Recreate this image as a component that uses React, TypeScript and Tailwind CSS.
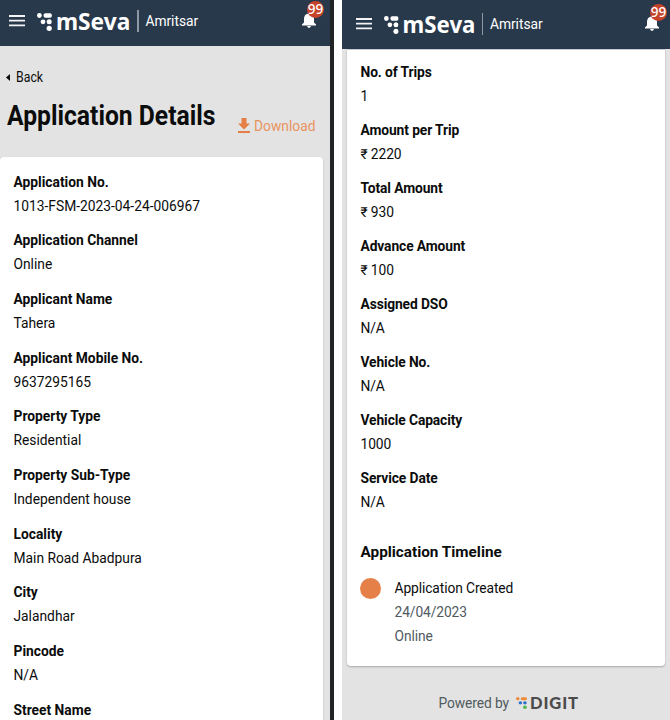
const leftFields = [
  ['Application No.', '1013-FSM-2023-04-24-006967'],
  ['Application Channel', 'Online'],
  ['Applicant Name', 'Tahera'],
  ['Applicant Mobile No.', '9637295165'],
  ['Property Type', 'Residential'],
  ['Property Sub-Type', 'Independent house'],
  ['Locality', 'Main Road Abadpura'],
  ['City', 'Jalandhar'],
  ['Pincode', 'N/A'],
  ['Street Name', ''],
];

const rightFields = [
  ['No. of Trips', '1'],
  ['Amount per Trip', '₹ 2220'],
  ['Total Amount', '₹ 930'],
  ['Advance Amount', '₹ 100'],
  ['Assigned DSO', 'N/A'],
  ['Vehicle No.', 'N/A'],
  ['Vehicle Capacity', '1000'],
  ['Service Date', 'N/A'],
];

function Dots({ className, colors }: { className: string; colors: string[] }) {
  return (
    <svg className={className} viewBox="0 0 15 18" preserveAspectRatio="none">
      <circle cx="2.4" cy="2.5" r="2.4" fill={colors[0]} />
      <rect x="6.600" y="0.2" width="8.2" height="4.6" rx="1.8" fill={colors[0]} />
      <circle cx="6" cy="8.8" r="2.4" fill={colors[1]} />
      <circle cx="12.2" cy="8.8" r="2.5" fill={colors[1]} />
      <circle cx="12.2" cy="15.3" r="2.6" fill={colors[2]} />
    </svg>
  );
}

function Header({ className, brand }: { className: string; brand: string }) {
  return (
    <header className={`flex shrink-0 items-start bg-[#28394b] text-white ${className}`}>
      <svg className="mt-[15px] h-3 w-4 shrink-0" viewBox="0 0 16 12">
        <path d="M0 1h16M0 5.700h16M0 10.400h16" stroke="#f4f4f6" strokeWidth="1.8" />
      </svg>
      <div className={`flex shrink-0 items-start ${brand}`}>
        <Dots className="mt-[13px] h-[18px] w-[15px] shrink-0" colors={['#fff', '#fff', '#fff']} />
        <span className="mt-[5.500px] ml-1 w-[75px] shrink-0 font-['Noto_Sans',sans-serif] text-[22.7px] leading-8 font-bold whitespace-nowrap">
          mSeva
        </span>
      </div>
      <span className="mt-[10px] ml-[6px] h-[22px] w-[1.5px] shrink-0 bg-[#9099a3]" />
      <span className="mt-[11px] ml-[7px] text-[13.8px] leading-5 tracking-[-0.05px]">Amritsar</span>
      <div className="relative mt-[12px] ml-auto h-4 w-[14px]">
        <svg className="h-4 w-[14px]" viewBox="0 0 14 16" fill="#fff">
          <path d="M6 0h2v1.400c2.500.6 4 2.500 4 5.300v3.700l2 2v1H0v-1l2-2V6.700c0-2.800 1.500-4.700 4-5.300zM5.200 14h3.600c0 1-.7 1.800-1.800 1.800S5.200 15 5.200 14z" />
        </svg>
        <span className="absolute -top-[11px] left-[5px] flex h-[17px] w-[17px] items-center justify-center rounded-full bg-[#c5432b] pt-px font-['Noto_Sans',sans-serif] text-[13.5px] leading-none font-medium">
          99
        </span>
      </div>
    </header>
  );
}

function Field({ label, value, pitch }: { label: string; value: string; pitch: string }) {
  return (
    <div className={`shrink-0 leading-6 whitespace-nowrap ${pitch}`}>
      <div className="font-bold">{label}</div>
      <div>{value}</div>
    </div>
  );
}

export default function App() {
  return (
    <div className="flex h-[720px] w-[670px] overflow-hidden bg-white font-[Roboto,'Noto_Sans',sans-serif] text-[#0b0c0c]">
      <section className="flex w-[330px] shrink-0 flex-col overflow-hidden bg-[#e3e3e3]">
        <Header className="h-[46px] pr-[14px] pl-[9px]" brand="ml-3" />
        <div className="flex h-[111px] shrink-0 flex-col">
          <div className="mt-[21px] flex h-5 items-center pl-[6px]">
            <svg className="h-[7px] w-1" viewBox="0 0 4 7">
              <path d="M4 0v7L0 3.500z" fill="#0b0c0c" />
            </svg>
            <span className="ml-[6px] origin-left scale-x-[0.88] text-[14px]">Back</span>
          </div>
          <div className="flex items-start pl-[7px]">
            <h1 className="mt-[11px] w-[231px] origin-left scale-x-[0.881] text-[28px] leading-9 font-bold whitespace-nowrap">
              Application Details
            </h1>
            <svg className="mt-[31px] h-[15px] w-3 shrink-0" viewBox="0 0 12 15" fill="#e57f46">
              <path d="M3.500 0h5v5.500H12L6 11.500 0 5.500h3.500zM0 13h12v2H0z" />
            </svg>
            <span className="mt-[29px] ml-1 text-[13.8px] leading-5 text-[#e9935f]">Download</span>
          </div>
        </div>
        <main className="mr-[7px] flex flex-1 flex-col overflow-hidden rounded-t bg-white pt-[12.5px] pl-[13.5px] text-[13.8px] shadow-[0_1px_2px_#0003]">
          {leftFields.map(([label, value]) => (
            <Field key={label} label={label} value={value} pitch="h-[58.7px]" />
          ))}
        </main>
      </section>
      <div className="w-1 shrink-0 bg-[#222325]" />
      <div className="w-2 shrink-0 bg-white" />
      <section className="flex w-[328px] shrink-0 flex-col bg-[#e3e3e3]">
        <Header
          className="h-[49px] pt-[3px] pr-[11px] pl-[14px]"
          brand="-mr-[2px] ml-[11.5px] origin-left scale-x-[0.98]"
        />
        <main className="mr-[5px] ml-[5px] h-[617px] shrink-0 rounded-b border-t border-[#c5cacf] bg-white pt-[9.5px] pl-[13.5px] text-[13.8px] tracking-[-0.1px] shadow-[0_1px_2px_#0004]">
          {rightFields.map(([label, value]) => (
            <Field key={label} label={label} value={value} pitch="h-[58.15px]" />
          ))}
          <h2 className="mt-[15px] text-[15.3px] leading-6 font-bold tracking-normal">Application Timeline</h2>
          <div className="mt-3 flex items-start">
            <div className="-ml-px mt-[2px] h-[21px] w-[21px] rounded-full bg-[#e58049]" />
            <div className="ml-[14px] leading-6 text-[#505a5f]">
              <div className="text-[#0b0c0c]">Application Created</div>
              <div>24/04/2023</div>
              <div>Online</div>
            </div>
          </div>
        </main>
        <footer className="mt-[27px] flex h-5 items-center pl-[96.5px] text-[#505a5f]">
          <span className="pt-px text-[13.8px] tracking-[-0.1px]">Powered by</span>
          <Dots className="ml-[7px] h-3 w-[11px]" colors={['#ee8a38', '#2b70c9', '#50b750']} />
          <span className="ml-[3px] font-[Lato,sans-serif] text-[16.500px] leading-5 font-black tracking-[0.9px] text-[#4b4b4b]">
            DIGIT
          </span>
        </footer>
      </section>
    </div>
  );
}
